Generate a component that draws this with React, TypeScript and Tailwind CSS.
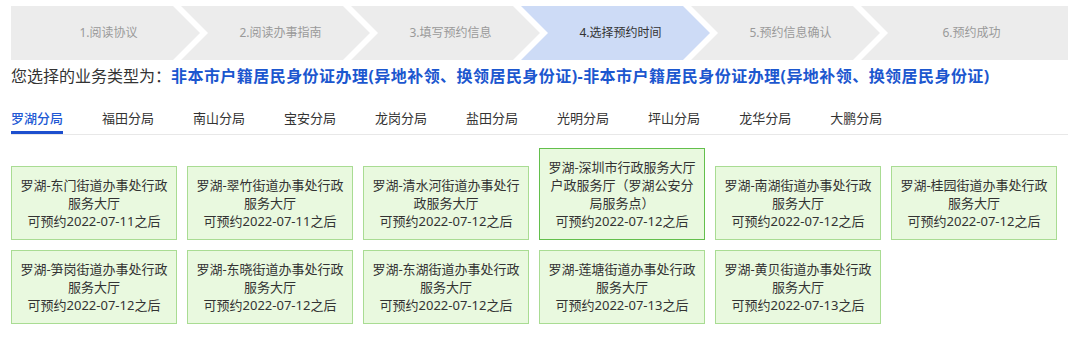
const STEPS = [
  "1.阅读协议",
  "2.阅读办事指南",
  "3.填写预约信息",
  "4.选择预约时间",
  "5.预约信息确认",
  "6.预约成功",
];

const TABS = [
  "罗湖分局",
  "福田分局",
  "南山分局",
  "宝安分局",
  "龙岗分局",
  "盐田分局",
  "光明分局",
  "坪山分局",
  "龙华分局",
  "大鹏分局",
];

type Hall = { lines: string[]; date: string; featured?: boolean };

const ROW_ONE: Hall[] = [
  { lines: ["罗湖-东门街道办事处行政", "服务大厅"], date: "2022-07-11" },
  { lines: ["罗湖-翠竹街道办事处行政", "服务大厅"], date: "2022-07-11" },
  { lines: ["罗湖-清水河街道办事处行", "政服务大厅"], date: "2022-07-12" },
  {
    lines: ["罗湖-深圳市行政服务大厅", "户政服务厅（罗湖公安分", "局服务点）"],
    date: "2022-07-12",
    featured: true,
  },
  { lines: ["罗湖-南湖街道办事处行政", "服务大厅"], date: "2022-07-12" },
  { lines: ["罗湖-桂园街道办事处行政", "服务大厅"], date: "2022-07-12" },
];

const ROW_TWO: Hall[] = [
  { lines: ["罗湖-笋岗街道办事处行政", "服务大厅"], date: "2022-07-12" },
  { lines: ["罗湖-东晓街道办事处行政", "服务大厅"], date: "2022-07-12" },
  { lines: ["罗湖-东湖街道办事处行政", "服务大厅"], date: "2022-07-12" },
  { lines: ["罗湖-莲塘街道办事处行政", "服务大厅"], date: "2022-07-13" },
  { lines: ["罗湖-黄贝街道办事处行政", "服务大厅"], date: "2022-07-13" },
];

const clipFirst =
  "[clip-path:polygon(0_0,calc(100%_-_27px)_0,100%_50%,calc(100%_-_27px)_100%,0_100%)]";
const clipMiddle =
  "[clip-path:polygon(0_0,calc(100%_-_27px)_0,100%_50%,calc(100%_-_27px)_100%,0_100%,27px_50%)]";
const clipLast = "[clip-path:polygon(0_0,100%_0,100%_100%,0_100%,27px_50%)]";

function HallCard({ hall }: { hall: Hall }) {
  return (
    <div
      className={`w-[166px] shrink-0 border bg-[#e9f9df] py-[9px] text-center text-[13px] leading-[18px] whitespace-nowrap text-[#333] ${
        hall.featured ? "border-[#63bf4c]" : "border-[#a9dc93]"
      }`}
    >
      {hall.lines.map((line) => (
        <div key={line}>{line}</div>
      ))}
      <div>可预约{hall.date}之后</div>
    </div>
  );
}

export default function App() {
  return (
    <div className="h-[338px] w-[1080px] overflow-hidden bg-white px-[11px] pt-[6px] font-['Noto_Sans','Noto_Sans_CJK_SC',sans-serif]">
      {/* steps */}
      <div className="flex h-[54px] w-[1057px]">
        {STEPS.map((step, i) => {
          const active = i === 3;
          const clip = i === 0 ? clipFirst : i === STEPS.length - 1 ? clipLast : clipMiddle;
          return (
            <div
              key={step}
              className={`flex h-full items-center justify-center text-[12px] ${clip} ${
                i === 0 ? "w-[189px] pl-[6px]" : i === STEPS.length - 1 ? "-ml-[19px] flex-1 pl-[14px]" : "-ml-[19px] w-[189px] pl-[10px]"
              } ${active ? "bg-[#cddbf6] text-[#333]" : "bg-[#ececec] text-[#9a9a9a]"}`}
            >
              {step}
            </div>
          );
        })}
      </div>

      {/* business type */}
      <div className="mt-[4px] text-[16px] leading-6 whitespace-nowrap text-[#333]">
        您选择的业务类型为：
        <span className="font-bold tracking-[0.45px] text-[#1c57cf]">
          非本市户籍居民身份证办理(异地补领、换领居民身份证)-非本市户籍居民身份证办理(异地补领、换领居民身份证)
        </span>
      </div>

      {/* tabs */}
      <div className="mt-[20px] flex w-[1057px] gap-[39px] border-b border-[#e8e8e8]">
        {TABS.map((tab, i) => (
          <div
            key={tab}
            className={`border-b-[3px] pb-[3px] text-[13px] leading-5 ${
              i === 0 ? "border-[#1d4fce] font-medium text-[#2159d4]" : "border-transparent text-[#333]"
            }`}
          >
            {tab}
          </div>
        ))}
      </div>

      {/* halls */}
      <div className="mt-[13px] flex items-end gap-[10px]">
        {ROW_ONE.map((hall) => (
          <HallCard key={hall.lines[0]} hall={hall} />
        ))}
      </div>
      <div className="mt-[10px] flex gap-[10px]">
        {ROW_TWO.map((hall) => (
          <HallCard key={hall.lines[0]} hall={hall} />
        ))}
      </div>
    </div>
  );
}
